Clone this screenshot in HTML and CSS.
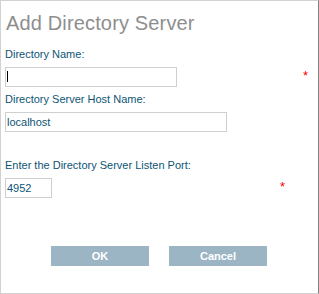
FILE: index.html
```html
<!DOCTYPE html>
<html lang="en">
<head>
  <meta charset="UTF-8">
  <title>Add Directory Server</title>
  <link rel="stylesheet" href="styles.css">
</head>
<body>
  <div class="dialog">
    <h2>Add Directory Server</h2>

    <label class="label first">Directory Name:</label>
    <div class="row">
      <span class="field">
        <input type="text" class="input name" value="">
        <span class="caret"></span>
      </span>
      <span class="req req-name">*</span>
    </div>

    <label class="label">Directory Server Host Name:</label>
    <div class="row">
      <input type="text" class="input host" value="localhost">
    </div>

    <label class="label port-label">Enter the Directory Server Listen Port:</label>
    <div class="row">
      <input type="text" class="input port" value="4952">
      <span class="req req-port">*</span>
    </div>

    <div class="buttons">
      <button>OK</button>
      <button>Cancel</button>
    </div>
  </div>
</body>
</html>
```

FILE: styles.css
```css
body {
  margin: 0;
  background-color: white;
  font-family: 'Liberation Sans', Arial, sans-serif;
}

.dialog {
  width: 319px;
  height: 294px;
  box-sizing: border-box;
  border: 1px solid #d2d2d2;
  border-right-color: #808080;
  padding: 11px 0 0 4px;
}

h2 {
  margin: 0 0 0 1px;
  font-size: 20px;
  font-weight: normal;
  line-height: 23px;
  letter-spacing: 0.15px;
  color: #8e8e8e;
}

.label {
  display: block;
  margin-top: 6px;
  font-size: 11px;
  line-height: 13px;
  color: #0d5575;
}

.label.first {
  margin-top: 13px;
}

.label.port-label {
  margin-top: 27px;
}

.row {
  display: flex;
  align-items: flex-start;
  margin-top: 6px;
}

.field {
  position: relative;
  display: flex;
}

.input {
  box-sizing: border-box;
  height: 20px;
  margin: 0;
  padding: 0 1px;
  border: 1px solid #cfcfcf;
  font-family: 'Liberation Sans', Arial, sans-serif;
  font-size: 11px;
  color: #0d5575;
  outline: none;
}

.input.name { width: 172px; }
.input.host { width: 222px; }
.input.port { width: 47px; }

.caret {
  position: absolute;
  left: 2px;
  top: 4px;
  width: 1px;
  height: 11px;
  background-color: black;
}

.req {
  margin-top: 3px;
  font-size: 13px;
  line-height: 12px;
  color: #ff0000;
}

.req-name { margin-left: 126px; }
.req-port { margin-left: 228px; }

.buttons {
  display: flex;
  gap: 20px;
  margin-top: 48px;
  padding-left: 46px;
}

.buttons button {
  width: 98px;
  height: 20px;
  border: none;
  padding: 0;
  background-color: #9cb5c5;
  color: white;
  font-family: 'Liberation Sans', Arial, sans-serif;
  font-size: 11px;
  font-weight: bold;
  cursor: pointer;
}
```
